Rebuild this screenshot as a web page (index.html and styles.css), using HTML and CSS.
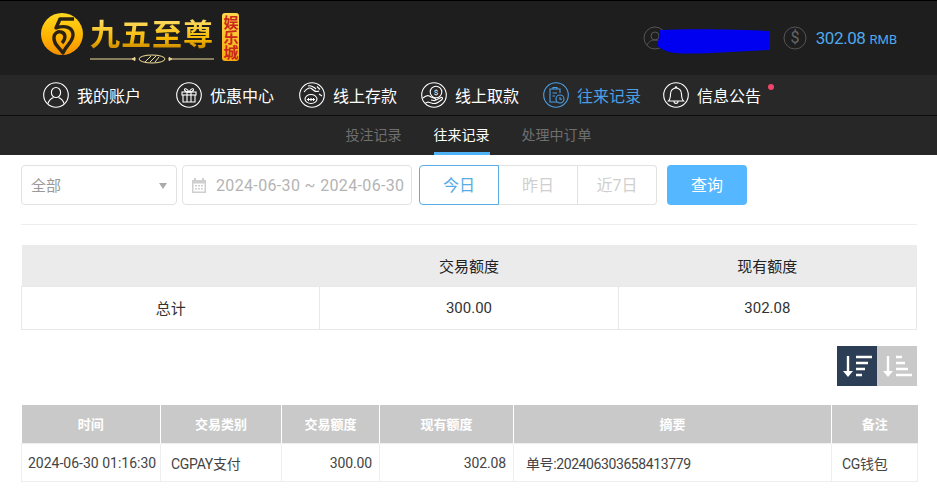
FILE: index.html
```html
<!DOCTYPE html>
<html lang="zh-CN">
<head>
<meta charset="utf-8">
<title>往来记录</title>
<link rel="stylesheet" href="styles.css">
</head>
<body>
<header class="top">
  <div class="logo">
    <svg class="logo-mark" viewBox="0 0 44 44" width="44" height="44">
      <defs><linearGradient id="gold" x1="0" y1="0" x2="0" y2="1"><stop offset="0" stop-color="#ffd820"/><stop offset=".55" stop-color="#ffb400"/><stop offset="1" stop-color="#f49000"/></linearGradient></defs>
      <circle cx="21" cy="22" r="21" fill="url(#gold)"/>
      <path d="M33 7H19L15 16C24 13 32 15 32 23C32 30 25 33 22 41C18 35 12 32 13 25C13.500 21 17 19 20 20C25 21 25 27 21 31" fill="none" stroke="#2a2115" stroke-width="3.400" stroke-linejoin="round"/>
    </svg>
    <div class="logo-words">
      <div class="logo-title">九五至尊</div>
      <svg class="logo-line" viewBox="0 0 124 10" width="124" height="10">
        <path d="M0 5H42M82 5H124M42 5l3-1.500v3zM82 5l-3-1.500v3z" stroke="#f0dc9a" stroke-width="1" fill="#f0dc9a"/>
        <ellipse cx="62" cy="5" rx="13" ry="4" fill="#1e1e1e" stroke="#f0dc9a"/>
        <path d="M55 8l6-6M60 8l6-6M65 8l4-5" stroke="#f0dc9a" fill="none"/>
      </svg>
    </div>
    <div class="logo-badge">娱乐城</div>
  </div>
  <div class="account">
    <span class="user">
      <svg class="acc-icon" viewBox="0 0 24 24" width="24" height="24"><circle cx="12" cy="12" r="11" fill="none" stroke="#555"/><circle cx="12" cy="10" r="4" fill="none" stroke="#555"/><path d="M4 19c2-4 5-5 8-5s6 1 8 5" fill="none" stroke="#555"/></svg>
      <svg class="scribble" viewBox="0 0 113 25" width="113" height="25"><path d="M3 1C30 0 60 0 112 2V21C80 22 40 26 18 24C8 23 2 19 0 16C2 11 2 6 3 1Z" fill="#0000f0"/></svg>
    </span>
    <svg class="acc-icon coin" viewBox="0 0 24 24" width="24" height="24"><circle cx="12" cy="12" r="11" fill="none" stroke="#555"/><text x="12" y="17" text-anchor="middle" class="coin-sign">$</text></svg>
    <span class="money">302.08</span>
    <span class="unit">RMB</span>
  </div>
</header>

<nav class="nav">
  <a class="nav-item first">
    <svg class="nav-icon" viewBox="0 0 26 26"><circle cx="13" cy="13" r="12.300"/><ellipse cx="13" cy="10.500" rx="4.600" ry="5"/><path d="M5 21.500C6 18 8 16.500 10.500 15.500M21 21.500C20 18 18 16.500 15.500 15.500"/></svg>
    我的账户
  </a>
  <a class="nav-item second">
    <svg class="nav-icon" viewBox="0 0 26 26"><circle cx="13" cy="13" r="12.300"/><rect x="6" y="10" width="14" height="3"/><path d="M7 13V20H19V13M11 10V20M15 10V20M13 10C11 6 8 6 8.500 8C9 9.500 11 10 13 10C15 10 17 9.500 17.500 8C18 6 15 6 13 10Z"/></svg>
    优惠中心
  </a>
  <a class="nav-item">
    <svg class="nav-icon" viewBox="0 0 26 26"><circle cx="13" cy="13" r="12.300"/><ellipse cx="12" cy="17" rx="6" ry="4.500"/><path d="M8 17.500h8M9.500 16v3M12 16v3M14.500 16v3M5 10C8 6 11 5 13 7C15 9 18 10 20 9M9 4C12 3 16 6 17 7M18 4.500L21 7.500M20 12L23 14"/></svg>
    线上存款
  </a>
  <a class="nav-item">
    <svg class="nav-icon" viewBox="0 0 26 26"><circle cx="13" cy="13" r="12.300"/><circle cx="15" cy="10" r="5.800"/><path d="M2 16C5 13 8 13 10 15L14 16.500C15.500 17.500 14 19 12.500 18.500L10 18M15 18L20 15.500C21.500 15 22 16.500 21 17.500C18 20 15 22 12 21.500L7 20L4.500 21"/><text x="15" y="13" text-anchor="middle" class="icon-sign">$</text></svg>
    线上取款
  </a>
  <a class="nav-item active">
    <svg class="nav-icon" viewBox="0 0 26 26"><circle cx="13" cy="13" r="12.300"/><path d="M14 20H7V7H10V5.500H14V7H17V11M10 7H14M9.500 11H14M9.500 14H12"/><circle cx="17" cy="17" r="4"/><path d="M17 15V17.200H19"/></svg>
    往来记录
  </a>
  <a class="nav-item last">
    <svg class="nav-icon" viewBox="0 0 26 26"><circle cx="13" cy="13" r="12.300"/><path d="M5.500 19C7.500 17 7.500 15 7.500 12C7.500 8.500 10 6 13 6C16 6 18.500 8.500 18.500 12C18.500 15 18.500 17 20.500 19ZM11 19.500C11 22 15 22 15 19.500M12 6C12 4.500 14 4.500 14 6"/></svg>
    信息公告<span class="dot"></span>
  </a>
</nav>

<div class="subnav">
  <a class="sub-item">投注记录</a>
  <a class="sub-item current">往来记录</a>
  <a class="sub-item">处理中订单</a>
</div>

<main class="main">
  <div class="filters">
    <div class="select">全部<span class="caret"></span></div>
    <div class="dates">
      <svg class="cal" viewBox="0 0 16 16" width="16" height="16"><path d="M1 3H15V16H1Z" fill="#cfcfcf"/><path d="M4 1V4M12 1V4" stroke="#cfcfcf" stroke-width="2"/><path d="M2.500 6.500H13.500V14.500H2.500Z" fill="#fff"/><path d="M4 8h2v1.500H4zM7 8h2v1.500H7zM10 8h2v1.500h-2zM4 11h2v1.500H4zM7 11h2v1.500H7zM10 11h2v1.500h-2z" fill="#cfcfcf"/></svg>
      2024-06-30 ~ 2024-06-30
    </div>
    <div class="range">
      <button class="range-btn on">今日</button>
      <button class="range-btn">昨日</button>
      <button class="range-btn">近7日</button>
    </div>
    <button class="search">查询</button>
  </div>

  <table class="summary">
    <thead><tr><th></th><th>交易额度</th><th>现有额度</th></tr></thead>
    <tbody><tr><td>总计</td><td>300.00</td><td>302.08</td></tr></tbody>
  </table>

  <div class="sorts">
    <button class="sort dark">
      <svg viewBox="0 0 40 40" width="40" height="40"><path d="M11 10V27" stroke="#fff" stroke-width="2.400"/><path d="M6 25H16L11 31Z" fill="#fff"/><path d="M19 11H35M19 17H31M19 23H28M19 29H25" stroke="#fff" stroke-width="2.400"/></svg>
    </button>
    <button class="sort light">
      <svg viewBox="0 0 40 40" width="40" height="40"><path d="M11 10V27" stroke="#fff" stroke-width="2.400"/><path d="M6 25H16L11 31Z" fill="#fff"/><path d="M19 11H25M19 17H28M19 23H31M19 29H35" stroke="#fff" stroke-width="2.400"/></svg>
    </button>
  </div>

  <table class="records">
    <colgroup><col class="c1"><col class="c2"><col class="c3"><col class="c4"><col class="c5"><col class="c6"></colgroup>
    <thead><tr><th>时间</th><th>交易类别</th><th>交易额度</th><th>现有额度</th><th>摘要</th><th>备注</th></tr></thead>
    <tbody><tr>
      <td class="nowrap">2024-06-30 01:16:30</td>
      <td class="pad">CGPAY支付</td>
      <td class="num">300.00</td>
      <td class="num">302.08</td>
      <td class="pad memo">单号:202406303658413779</td>
      <td class="pad">CG钱包</td>
    </tr></tbody>
  </table>
</main>
</body>
</html>
```
FILE: styles.css
```css
* { box-sizing: border-box; }
html, body { margin: 0; height: 493px; overflow: hidden; }
body {
  background: #fff;
  color: #333;
  font-family: Roboto, "Noto Sans CJK SC", sans-serif;
  font-size: 14px;
}
a { text-decoration: none; }
button { font-family: inherit; padding: 0; cursor: pointer; }

.top {
  height: 75px;
  background: #1e1e1e;
  border-top: 1px solid #000;
  display: flex;
  align-items: center;
  justify-content: space-between;
  padding: 0 40px 0 41px;
}
.logo { display: flex; align-items: flex-start; height: 60px; padding-top: 4px; }
.logo-mark { flex: none; margin-right: 5px; }
.logo-words { width: 124px; margin-top: 3px; }
.logo-title {
  font-family: "Noto Sans CJK SC", sans-serif;
  font-size: 30px;
  font-weight: 700;
  line-height: 34px;
  letter-spacing: 1px;
  white-space: nowrap;
  background: linear-gradient(#ffe680, #f6b800 70%, #c98a00);
  -webkit-background-clip: text;
  background-clip: text;
  color: transparent;
}
.logo-line { display: block; margin-top: 5px; }
.logo-badge {
  width: 17px;
  height: 48px;
  margin: 1px 0 0 8px;
  border-radius: 3px;
  background: linear-gradient(#ffd84a, #f5ab10);
  color: #c9281a;
  font-family: "Noto Sans CJK SC", sans-serif;
  font-size: 15px;
  font-weight: 700;
  line-height: 16px;
  text-align: center;
  writing-mode: vertical-rl;
  display: flex;
  align-items: center;
  justify-content: center;
}

.account { display: flex; align-items: center; }
.user { position: relative; display: block; width: 140px; height: 24px; }
.acc-icon { display: block; }
.scribble { position: absolute; left: 14px; top: 3px; }
.coin { margin-right: 9px; }
.coin-sign { font-size: 16px; fill: #666; font-family: Roboto, sans-serif; }
.money { font-size: 17px; letter-spacing: -.4px; color: #4fa9ec; }
.unit { font-size: 13px; color: #4fa9ec; margin-left: 4px; margin-top: 2px; }

.nav {
  height: 41px;
  background: #282828;
  border-bottom: 1px solid #0e0e0e;
  display: flex;
  align-items: center;
  padding-left: 43px;
  gap: 24px;
}
.nav-item {
  display: flex;
  align-items: center;
  gap: 8px;
  position: relative;
  color: #fff;
  font-family: "Noto Sans CJK SC", sans-serif;
  font-size: 16px;
  white-space: nowrap;
}
.nav-item.first { margin-right: 11px; }
.nav-item.second { margin-right: 1px; }
.nav-item.last { margin-left: -2px; }
.nav-item.active { color: #4a9fe6; }
.nav-icon {
  width: 26px;
  height: 26px;
  flex: none;
  fill: none;
  stroke: currentColor;
  stroke-width: 1.100;
}
.icon-sign { font-size: 8px; fill: currentColor; stroke: none; font-family: Roboto, sans-serif; }
.dot {
  position: absolute;
  right: -5px;
  top: 2px;
  width: 6px;
  height: 6px;
  border-radius: 50%;
  background: #f0446c;
}

.subnav {
  height: 39px;
  background: #272727;
  display: flex;
  justify-content: center;
  gap: 32px;
}
.sub-item {
  font-family: "Noto Sans CJK SC", sans-serif;
  font-size: 14px;
  line-height: 37px;
  color: #6f6f6f;
}
.sub-item.current {
  color: #fff;
  border-bottom: 3px solid #4fb2f6;
  height: 39px;
}

.main { padding: 10px 20px 0 21px; }
.filters {
  display: flex;
  height: 60px;
  border-bottom: 1px solid #eee;
  margin-bottom: 20px;
  align-items: flex-start;
}
.select, .dates {
  height: 40px;
  border: 1px solid #e2e2e2;
  border-radius: 4px;
  display: flex;
  align-items: center;
  font-size: 15px;
}
.select {
  position: relative;
  width: 156px;
  padding: 0 0 2px 9px;
  margin-right: 5px;
  color: #9a9a9a;
  font-family: "Noto Sans CJK SC", sans-serif;
}
.caret {
  position: absolute;
  right: 9px;
  top: 17px;
  border-left: 4px solid transparent;
  border-right: 4px solid transparent;
  border-top: 6px solid #aaa;
}
.dates {
  width: 230px;
  padding-left: 8px;
  margin-right: 7px;
  color: #b4b4b4;
  font-size: 16px;
  letter-spacing: .35px;
  white-space: nowrap;
}
.cal { flex: none; margin-right: 9px; }
.range { display: flex; margin-right: 10px; }
.range-btn {
  width: 79px;
  height: 40px;
  padding-bottom: 2px;
  background: #fff;
  border: 1px solid #e2e2e2;
  border-left: 0;
  color: #cfcfcf;
  font-family: Roboto, "Noto Sans CJK SC", sans-serif;
  font-size: 16px;
}
.range-btn:last-child { border-radius: 0 4px 4px 0; }
.range-btn.on {
  width: 80px;
  border: 1px solid #59abe3;
  border-radius: 4px 0 0 4px;
  color: #59abe3;
}
.search {
  width: 80px;
  height: 40px;
  padding-bottom: 2px;
  border: 0;
  border-radius: 4px;
  background: #55b7ff;
  color: #fff;
  font-family: "Noto Sans CJK SC", sans-serif;
  font-size: 16px;
}

table {
  border-collapse: collapse;
  table-layout: fixed;
  width: 896px;
  font-family: Roboto, "Noto Sans CJK SC", sans-serif;
}
.summary th {
  height: 41px;
  background: #ebebeb;
  color: #222;
  font-weight: 400;
  font-size: 15px;
  text-align: center;
  padding: 0;
}
.summary td {
  height: 43px;
  border: 1px solid #e8e8e8;
  text-align: center;
  color: #333;
  font-size: 15px;
  padding: 0;
}

.sorts { display: flex; justify-content: flex-end; margin: 16px 0 19px; }
.sort { width: 40px; height: 40px; border: 0; display: block; }
.sort svg { display: block; }
.sort.dark { background: #2c3e56; }
.sort.light { background: #c9c9c9; }

.c1 { width: 139px; }
.c2 { width: 121px; }
.c3 { width: 98px; }
.c4 { width: 134px; }
.c5 { width: 318px; }
.c6 { width: 86px; }
.records th {
  height: 39px;
  background: #c9c9c9;
  border-left: 1px solid #fff;
  color: #fff;
  font-size: 13px;
  font-weight: 700;
  padding: 0;
  text-align: center;
}
.records th:first-child { border-left: 0; }
.records td {
  height: 38px;
  border: 1px solid #eee;
  padding: 0 7px 0 6px;
  font-size: 14px;
  color: #444;
  white-space: nowrap;
}
.records .pad { padding-left: 10px; letter-spacing: -.3px; }
.records .memo { padding-left: 12px; letter-spacing: -.4px; }
.records .num { text-align: right; letter-spacing: -.15px; }
```
